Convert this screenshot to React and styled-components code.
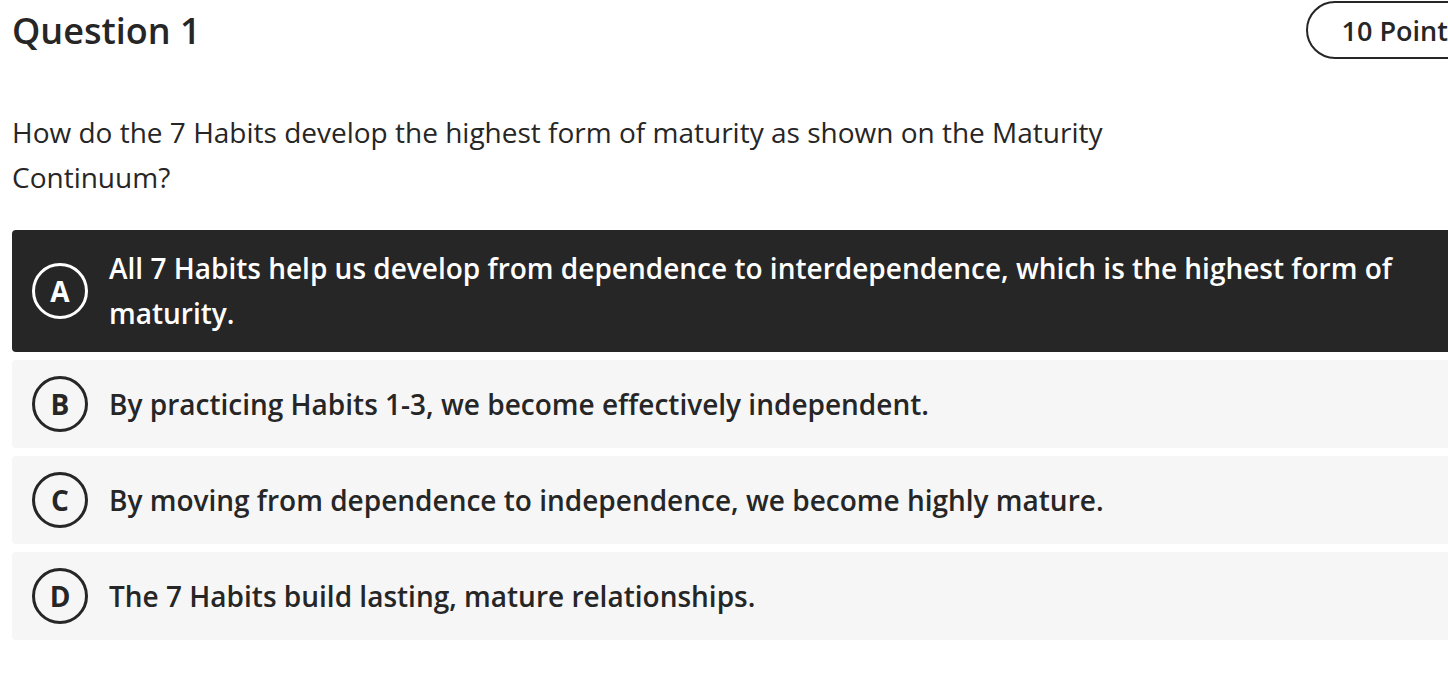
import React from "react";
import styled, { createGlobalStyle } from "styled-components";

const GlobalStyle = createGlobalStyle`
  html, body {
    margin: 0;
    padding: 0;
    overflow: hidden;
    background: #ffffff;
  }
  body {
    font-family: "Open Sans", "Noto Sans", sans-serif;
    color: #262626;
  }
`;

const options = [
  {
    letter: "A",
    text: "All 7 Habits help us develop from dependence to interdependence, which is the highest form of maturity.",
    selected: true,
  },
  { letter: "B", text: "By practicing Habits 1-3, we become effectively independent." },
  { letter: "C", text: "By moving from dependence to independence, we become highly mature." },
  { letter: "D", text: "The 7 Habits build lasting, mature relationships." },
];

function App() {
  return (
    <>
      <GlobalStyle />
      <Page>
        <Header>
          <Title>Question 1</Title>
          <Points>10 Points</Points>
        </Header>
        <Prompt>
          How do the 7 Habits develop the highest form of maturity as shown on the Maturity
          <br />
          Continuum?
        </Prompt>
        <OptionList>
          {options.map((o) => (
            <Option key={o.letter} $selected={o.selected}>
              <Letter $selected={o.selected}>{o.letter}</Letter>
              <OptionText>{o.text}</OptionText>
            </Option>
          ))}
        </OptionList>
      </Page>
    </>
  );
}

export default App;

const Page = styled.div`
  width: 1485px;
  padding-left: 12px;
`;

const Header = styled.div`
  display: flex;
  align-items: center;
  justify-content: space-between;
  height: 60px;
`;

const Title = styled.h1`
  margin: 0;
  font-size: 36px;
  font-weight: 600;
  line-height: 49px;
  color: #262626;
`;

const Points = styled.div`
  box-sizing: border-box;
  height: 58px;
  padding: 0 34px;
  border: 2px solid #262626;
  border-radius: 29px;
  display: flex;
  align-items: center;
  font-size: 27px;
  font-weight: 600;
  color: #262626;
`;

const Prompt = styled.p`
  margin: 50px 0 30px;
  font-size: 28px;
  line-height: 45px;
  font-weight: 400;
  color: #262626;
`;

const OptionList = styled.div`
  display: flex;
  flex-direction: column;
  gap: 8px;
`;

const Option = styled.div`
  display: flex;
  align-items: center;
  gap: 21px;
  padding: 16px 20px;
  border-radius: 4px;
  background: ${(p) => (p.$selected ? "#262626" : "#f6f6f6")};
  color: ${(p) => (p.$selected ? "#ffffff" : "#262626")};
`;

const Letter = styled.div`
  box-sizing: border-box;
  flex: 0 0 56px;
  width: 56px;
  height: 56px;
  border-radius: 50%;
  border: 3px solid ${(p) => (p.$selected ? "#ffffff" : "#262626")};
  display: flex;
  align-items: center;
  justify-content: center;
  font-size: 28px;
  font-weight: 700;
  line-height: 1;
`;

const OptionText = styled.div`
  font-size: 28px;
  line-height: 45px;
  font-weight: 600;
`;
